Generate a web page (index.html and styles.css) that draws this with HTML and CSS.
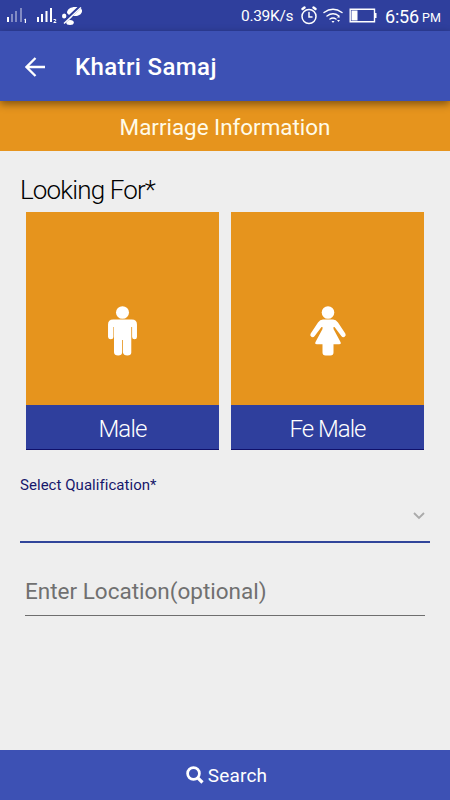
FILE: index.html
```html
<!DOCTYPE html>
<html lang="en">
<head>
<meta charset="utf-8">
<title>Khatri Samaj</title>
<link rel="stylesheet" href="styles.css">
</head>
<body>
<div class="status">
  <svg class="signals" width="80" height="31" viewBox="0 0 80 31">
    <g fill="#fff"><path d="M7 17h2v5H7z"/><path opacity=".4" d="M11 14h2v8h-2zM15 11h2v11h-2zM20 8h2v14h-2z"/><path d="M24 19.500l1.200-.8h.8V23h-1.200v-3z"/>
    <path d="M37 17h2v5h-2zM41 14h2v8h-2zM45.500 11h2v11h-2zM50 8h2v14h-2z"/></g>
    <path d="M53.500 19.500h2.200v1.300l-2 1.700h2.600" fill="none" stroke="#fff"/>
    <g fill="#fff"><path d="M67 13c0-4 4-6 8-6 5 0 7.500 2 7 4.500-.5 3-4 5-8 4.500l-5-1z"/><ellipse cx="64.200" cy="16" rx="2.200" ry="2.500"/><ellipse cx="70" cy="22.500" rx="3.800" ry="2.500"/><path d="M65 20l4-4 3 1-4 4z"/></g>
    <path d="M63 23L80 7" stroke="#2f3f9d" stroke-width="3.500"/><path d="M64 23.500L81 7.500" stroke="#fff" stroke-width="1.500"/>
  </svg>
  <span class="speed">0.39K/s</span>
  <svg class="indicators" width="80" height="31" viewBox="300 0 80 31">
    <g fill="none" stroke="#fff" stroke-width="1.500" stroke-linecap="round"><circle cx="309" cy="16.500" r="7"/><path d="M309 12.500v4.500h3"/><path stroke-width="2.500" d="M302.500 9l2-1.500M315.500 9l-2-1.500"/>
    <path d="M324 12.500q9-6.500 18 0M327 16q6-4.500 12 0M330 19q3-2 6 0"/></g>
    <path d="M331.500 21h3l-1.500 2zM337 17.500l1.500-2 1.500 2zM337 20h3l-1.500 2z" fill="#fff"/>
    <path d="M350.200 9.300h24.300v12.400h-24.300z" fill="none" stroke="#fff" stroke-width="1.400"/><path d="M351.500 10.500h6v10h-6zM374.500 13h2v5h-2z" fill="#fff"/>
  </svg>
  <span class="time">6:56</span><span class="pm">PM</span>
</div>
<header class="appbar">
  <svg class="back" width="20" height="20" viewBox="0 0 20 20"><path d="M20 10H1.500M10.500 1L1.500 10l9 9" fill="none" stroke="#fff" stroke-width="2.300"/></svg>
  <h1>Khatri Samaj</h1>
</header>
<h2 class="banner">Marriage Information</h2>
<main>
  <h3 class="label">Looking For*</h3>
  <div class="cards">
    <div class="card">
      <div class="picture"><svg width="31" height="50" viewBox="0 0 30 50" preserveAspectRatio="none" fill="#fff"><circle cx="15" cy="6.500" r="6.300"/><path d="M6 13.500h18q5 0 5 5V31q0 2.300-2.300 2.300T24.300 31V21h-.8v25.500q0 3-3.800 3t-4.300-3V34h-.8v12.500q0 3-3.800 3t-4-3V21h-.6v10q0 2.300-2.500 2.300T1 31V18.500q0-5 5-5z"/></svg></div>
      <div class="name">Male</div>
    </div>
    <div class="card">
      <div class="picture"><svg width="38" height="50" viewBox="0 0 38 50" fill="#fff"><circle cx="19" cy="6.500" r="6.300"/><path d="M14 13.500h10q3 0 5 3l7.300 11q1.200 2-.6 3.300-1.900 1.200-3.400-.8L25.500 21h-1v2l7 13q1 2.200-1.300 2.200H24.500v8.300q0 3-3 3h-5q-3 0-3-3v-8.300H7.800q-2.300 0-1.300-2.200l7-13v-2h-1L5.700 30q-1.500 2-3.400.8-1.800-1.300-.6-3.300l7.300-11q2-3 5-3z"/></svg></div>
      <div class="name female">Fe Male</div>
    </div>
  </div>
  <div class="select">
    <div class="caption">Select Qualification*</div>
    <svg width="12" height="8" viewBox="0 0 12 8"><path d="M1 1l5 5 5-5" fill="none" stroke="#aaa" stroke-width="1.800"/></svg>
  </div>
  <div class="location">Enter Location(optional)</div>
</main>
<footer>
  <svg width="18" height="18" viewBox="0 0 18 18"><g fill="none" stroke="#fff"><circle cx="7.500" cy="7.500" r="5.900" stroke-width="2.700"/><path d="M11.800 11.800l4.700 4.700" stroke-width="3.200"/></g></svg>
  <span>Search</span>
</footer>
</body>
</html>
```
FILE: styles.css
```css
* { box-sizing: border-box; }
body {
  margin: 0;
  width: 450px;
  height: 800px;
  display: flex;
  flex-direction: column;
  overflow: hidden;
  background: #eee;
  font-family: Roboto, sans-serif;
}
h1, h2, h3 { margin: 0; }
.status {
  height: 31px;
  display: flex;
  background: #2f3f9d;
  color: #fff;
  line-height: 33px;
  white-space: nowrap;
}
.signals { flex: none; overflow: visible; }
.speed { width: 59px; margin-left: 161px; font-size: 15.500px; letter-spacing: -0.3px; }
.indicators { flex: none; }
.time { width: 37px; margin-left: 5px; font-size: 18px; letter-spacing: -0.2px; }
.pm { font-size: 12.500px; line-height: 36px; }
.appbar {
  height: 70px;
  display: flex;
  align-items: center;
  padding-left: 25px;
  gap: 30px;
  background: #3d51b4;
  color: #fff;
  box-shadow: 0 3px 8px rgba(0, 0, 0, .45);
  z-index: 1;
}
.back { margin-top: 1px; }
h1 { font-size: 24px; font-weight: 500; line-height: 32px; margin-top: 2px; letter-spacing: 0.37px; }
.banner {
  height: 50px;
  background: #e6941d;
  color: #fffbe8;
  font-size: 22.400px;
  font-weight: 400;
  line-height: 53px;
  text-align: center;
}
main { flex: 1; padding: 21px 20px 0; }
.label { height: 40px; font-size: 26px; line-height: 37px; font-weight: 300; color: #000; letter-spacing: -0.85px; }
.cards { display: flex; gap: 12px; padding: 0 6px; }
.card { flex: 1; height: 238px; }
.picture { height: 193px; display: flex; justify-content: center; padding-top: 94px; background: #e6941d; }
.name {
  height: 45px;
  background: #2f3f9d;
  border-bottom: 1px solid #10106a;
  color: #fff;
  font-size: 24px;
  line-height: 48px;
  font-weight: 300;
  letter-spacing: -0.8px;
  text-align: center;
}
.female { letter-spacing: -1px; }
.select {
  height: 93px;
  padding: 26px 5px 0 0;
  border-bottom: 2px solid #30459a;
}
.caption { font-size: 15px; line-height: 18px; color: #17176b; letter-spacing: 0.04px; }
.select svg { display: block; margin: 18px 0 0 auto; }
.location {
  height: 73px;
  margin: 0 5px;
  padding-top: 33px;
  border-bottom: 1px solid #6e6e6e;
  color: #707070;
  font-size: 22.500px;
  line-height: 30px;
}
footer {
  height: 50px;
  display: flex;
  align-items: center;
  justify-content: center;
  gap: 4px;
  padding-left: 3px;
  background: #3d51b4;
  color: #fff;
  font-size: 19px;
  line-height: 24px;
  letter-spacing: 0.15px;
}
footer span { margin-top: 2px; }
```
